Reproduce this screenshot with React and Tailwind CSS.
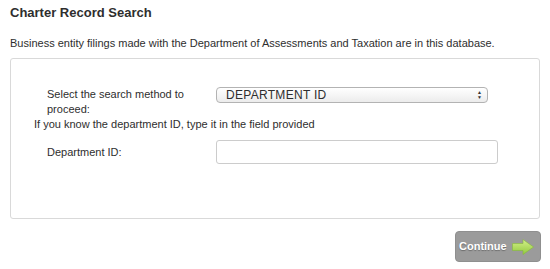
import React from 'react';

const Arrow = () => (
  <svg width="22" height="16" viewBox="0 0 22 16">
    <defs>
      <linearGradient id="ag" x1="0" y1="0" x2="0" y2="1">
        <stop offset="0" stopColor="#d4f08a" />
        <stop offset="1" stopColor="#92c93e" />
      </linearGradient>
    </defs>
    <path d="M0.5 4.5 H11 V0.5 L21.5 8 L11 15.5 V11.5 H0.5 Z" fill="url(#ag)" stroke="#86bb3a" strokeWidth="0.6" />
  </svg>
);

const App = () => {
  return (
    <div className="w-[550px] h-[269px] bg-white px-[10px] text-[#2e2e2e] font-['Liberation_Sans',Arial,sans-serif]">
      <h1 className="pt-[5px] text-[13px] leading-[16px] font-bold">Charter Record Search</h1>
      <p className="mt-[15px] text-[11px] leading-[15px]">
        Business entity filings made with the Department of Assessments and Taxation are in this database.
      </p>
      <div className="mt-[7px] h-[161px] border border-[#d9d9d9] rounded-[3px] pt-[28px] text-[11px] leading-[15px]">
        <div className="flex items-start">
          <label className="ml-[36px] w-[169px]">Select the search method to proceed:</label>
          <div className="relative w-[272px] h-[16px] rounded-[4px] border border-[#b3b3b3] bg-gradient-to-b from-white to-[#ececec] flex items-center pl-[9px]">
            <span className="text-[12px] leading-[14px] tracking-[0.3px]">DEPARTMENT ID</span>
            <span className="absolute right-[5px] top-[2px] flex flex-col items-center text-[5px] leading-[5px] text-[#333]">
              <span>▲</span>
              <span>▼</span>
            </span>
          </div>
        </div>
        <p className="ml-[23px] leading-[14px]">If you know the department ID, type it in the field provided</p>
        <div className="flex items-center mt-[9px]">
          <label className="ml-[36px] w-[169px]">Department ID:</label>
          <input type="text" className="w-[282px] h-[24px] rounded-[3px] border border-[#cccccc] bg-white outline-none" />
        </div>
      </div>
      <div className="flex justify-end mt-[12px]">
        <button className="mr-[-1px] w-[86px] h-[31px] rounded-[4px] bg-[#9b9b9b] border border-[#8f8f8f] flex items-center pl-[3px] gap-[5px]">
          <span className="text-white font-bold text-[11px] [text-shadow:0_1px_1px_rgba(0,0,0,0.3)]">Continue</span>
          <Arrow />
        </button>
      </div>
    </div>
  );
};

export default App;
